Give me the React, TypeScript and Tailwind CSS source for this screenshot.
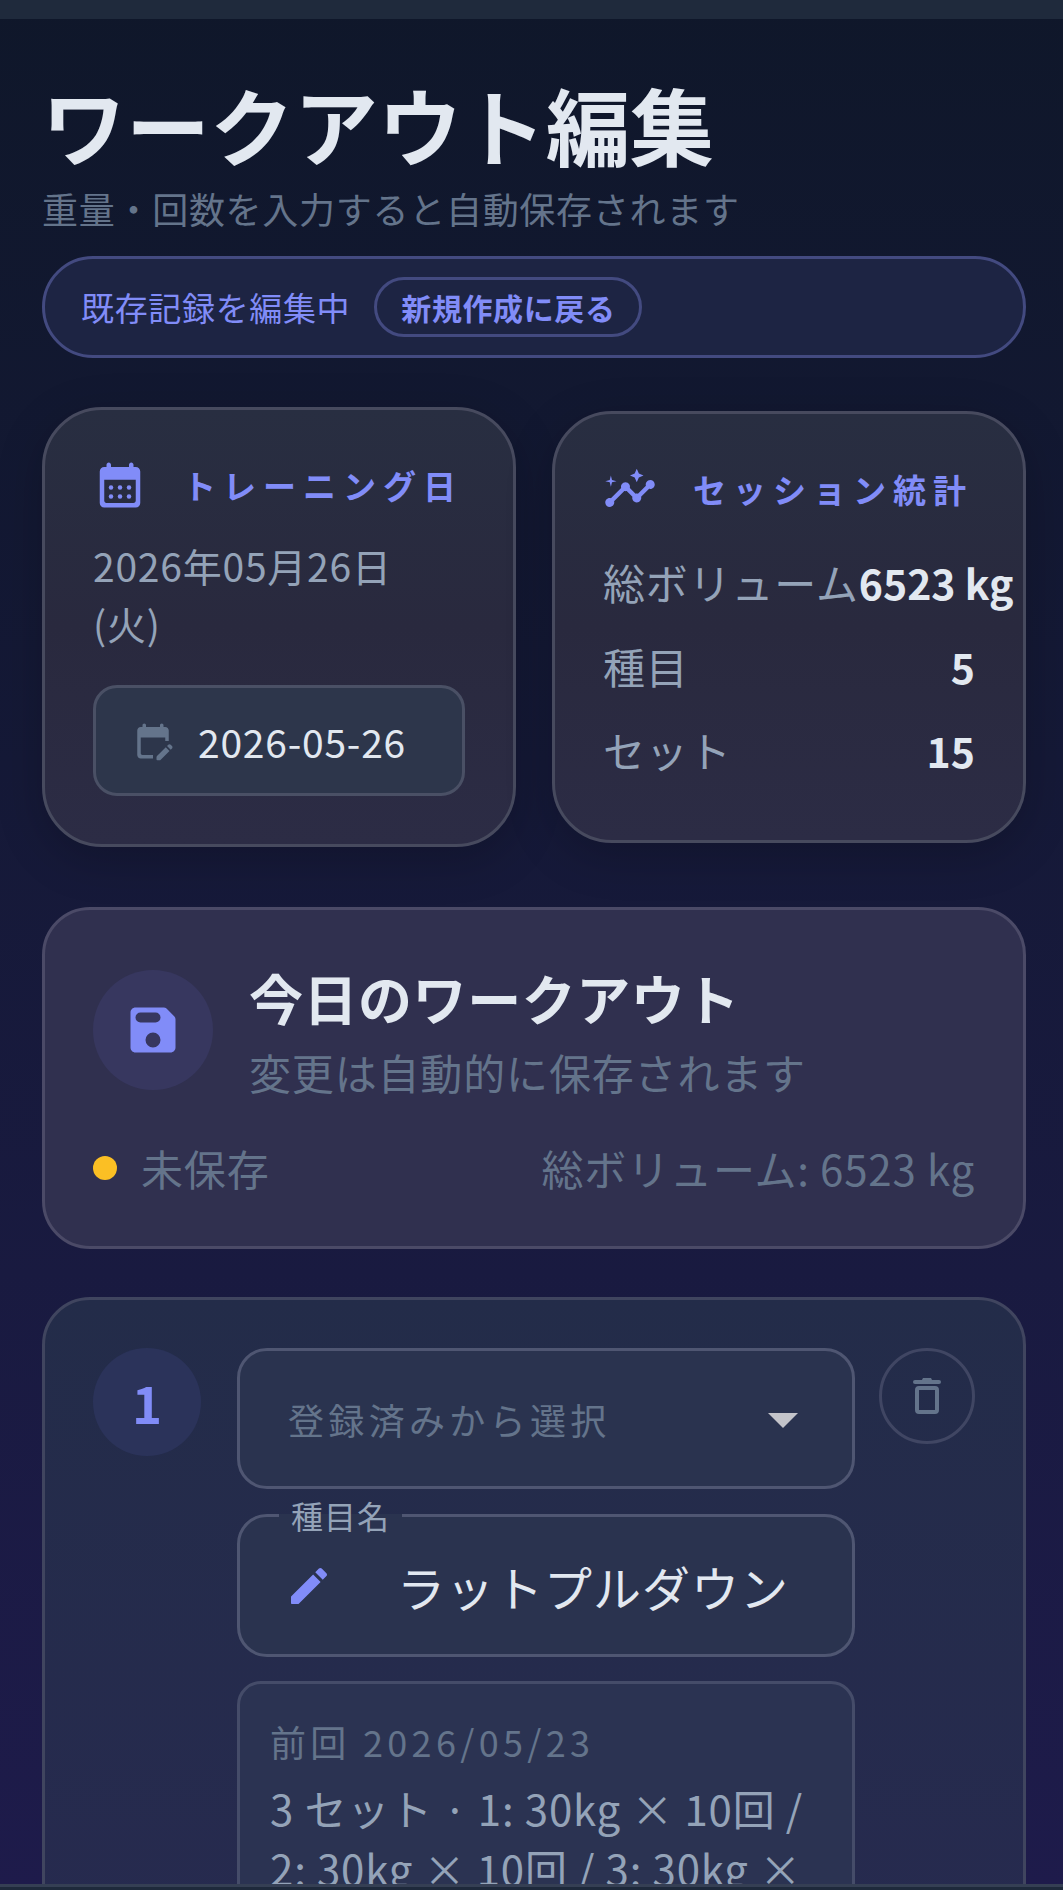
import type { ReactNode } from "react";
import { MdArrowDropDown, MdInsights } from "react-icons/md";

const stats = [
  { label: "総ボリューム", value: "6523 kg" },
  { label: "種目", value: "5" },
  { label: "セット", value: "15" },
];

function CalendarIcon() {
  return (
    <svg viewBox="0 0 24 24" className="size-[54px] shrink-0" fill="currentColor" aria-hidden="true">
      <path
        fillRule="evenodd"
        d="M7 2c.55 0 1 .45 1 1v1h8V3c0-.55.45-1 1-1s1 .45 1 1v1h1c1.1 0 2 .9 2 2v14c0 1.1-.9 2-2 2H5c-1.1 0-2-.9-2-2V6c0-1.1.9-2 2-2h1V3c0-.55.45-1 1-1zM5 9.7V19c0 .55.45 1 1 1h12c.55 0 1-.45 1-1V9.7z"
      />
      {[8, 12, 16].map((x) => (
        <g key={x}>
          <circle cx={x} cy="13.1" r="1" />
          <circle cx={x} cy="17.1" r="1" />
        </g>
      ))}
    </svg>
  );
}

function EditCalendarIcon() {
  return (
    <svg viewBox="0 0 24 24" className="size-[42px] shrink-0 text-[#64748b]" fill="currentColor" aria-hidden="true">
      <path d="M12 22H5c-1.11 0-2-.9-2-2V6c0-1.1.89-2 2-2h1V3c0-.55.45-1 1-1s1 .45 1 1v1h8V3c0-.55.45-1 1-1s1 .45 1 1v1h1c1.1 0 2 .9 2 2v6h-2v-2H5v9c0 .55.45 1 1 1h6z" />
      <path d="M22.13 16.99l.71-.71c.39-.39.39-1.02 0-1.41l-.71-.71c-.39-.39-1.02-.39-1.41 0l-.71.71zM21.42 17.7l-5 5c-.2.2-.45.3-.71.3H14.5c-.28 0-.5-.22-.5-.5v-1.21c0-.27.11-.52.29-.71l5.01-5z" />
    </svg>
  );
}

function SaveIcon() {
  return (
    <svg viewBox="0 0 24 24" className="size-[60px]" fill="currentColor" aria-hidden="true">
      <path
        fillRule="evenodd"
        d="M16.3 3c.4 0 .8.16 1.1.44l3.16 3.16c.28.3.44.7.44 1.1V19c0 1.1-.9 2-2 2H5c-1.1 0-2-.9-2-2V5c0-1.1.9-2 2-2zM7 5a2 2 0 0 0 0 4h6a2 2 0 0 0 0-4zM12 13a3 3 0 1 0 0 6 3 3 0 0 0 0-6z"
      />
    </svg>
  );
}

function PencilIcon() {
  return (
    <svg viewBox="0 0 24 24" className="size-12 shrink-0 text-[#818cf8]" fill="currentColor" aria-hidden="true">
      <path d="M3 17.46v3.04c0 .28.22.5.5.5h3.04c.13 0 .26-.05.35-.15L17.81 9.94l-3.75-3.75L3.15 17.1c-.1.1-.15.22-.15.36zM20.71 7.04c.39-.39.39-1.02 0-1.41l-2.34-2.34c-.39-.39-1.02-.39-1.41 0l-1.83 1.83 3.75 3.75z" />
    </svg>
  );
}

function TrashIcon() {
  return (
    <svg viewBox="0 0 24 24" className="size-12" fill="none" stroke="currentColor" strokeWidth="2" aria-hidden="true">
      <rect x="7" y="8" width="10" height="12" rx="1" />
      <path d="M6 5h12" strokeLinecap="round" />
      <path d="M9.2 4.5L10 3h4l.8 1.5z" fill="currentColor" stroke="none" />
    </svg>
  );
}

function StatCard({ icon, title, children }: { icon: ReactNode; title: string; children: ReactNode }) {
  return (
    <section className="min-w-0 flex-1 rounded-[60px] border-3 border-[#474a5e] bg-linear-to-b from-[#282e41] via-[#29293e] to-[#2c2c45] p-12 shadow-[0_12px_48px_rgba(0,0,0,0.2)]">
      <div className="flex h-[54px] items-center gap-9 text-[#818cf8]">
        {icon}
        <h2 className="text-[33px] leading-[48px] font-bold tracking-[7px] whitespace-nowrap">{title}</h2>
      </div>
      {children}
    </section>
  );
}

function Header() {
  return (
    <header>
      <h1 className="text-[84px] leading-[120px] font-bold text-[#e2e8f0]">ワークアウト編集</h1>
      <p className="text-[36px] leading-[48px] tracking-[0.02em] text-[#64748b]">
        重量・回数を入力すると自動保存されます
      </p>
      <div className="mt-6 flex h-[102px] items-center gap-6 rounded-full border-3 border-[#434a80] bg-[#1d2443] px-9 text-[#818cf8]">
        <span className="text-[33px] leading-[48px] tracking-[0.02em]">既存記録を編集中</span>
        <button className="h-[60px] rounded-full border-3 border-[#434a80] px-6 text-[30px] leading-[48px] font-bold tracking-[0.02em]">
          新規作成に戻る
        </button>
      </div>
    </header>
  );
}

function SaveCard() {
  return (
    <section className="mt-[60px] rounded-[48px] border-3 border-[#4b4a67] bg-[#30304f] p-12">
      <div className="flex items-center gap-9">
        <div className="flex size-[120px] shrink-0 items-center justify-center rounded-full bg-[#37375f] text-[#818cf8]">
          <SaveIcon />
        </div>
        <div>
          <h2 className="text-[54px] leading-[80px] font-bold tracking-[0.01em] text-[#e2e8f0]">今日のワークアウト</h2>
          <p className="mt-1 text-[42px] leading-[60px] tracking-[0.02em] text-[#64748b]">変更は自動的に保存されます</p>
        </div>
      </div>
      <div className="mt-9 flex items-center justify-between text-[42px] leading-[60px] tracking-[0.02em] text-[#64748b]">
        <div className="flex items-center gap-6">
          <span className="size-6 rounded-full bg-[#fbbf24]" />
          <span>未保存</span>
        </div>
        <span>総ボリューム: 6523 kg</span>
      </div>
    </section>
  );
}

function ExerciseCard() {
  return (
    <section className="mt-12 flex items-start rounded-[48px] border-3 border-[#40455f] bg-linear-to-b from-[#232c49] to-[#272a50] p-12">
      <div className="flex size-[108px] shrink-0 items-center justify-center rounded-full bg-[#2b335a] text-[51px] leading-[72px] font-bold text-[#818cf8]">
        1
      </div>

      <div className="mr-6 ml-9 flex min-w-0 flex-1 flex-col gap-6">
        <div className="relative">
          <select
            aria-label="登録済みから選択"
            defaultValue=""
            className="h-[141px] w-full appearance-none rounded-[30px] border-3 border-[#4f5672] bg-[#2a334f] pr-24 pl-12 text-[36px] tracking-[0.12em] text-[#64748b]"
          >
            <option value="">登録済みから選択</option>
            <option value="lat">ラットプルダウン</option>
          </select>
          <MdArrowDropDown className="pointer-events-none absolute inset-y-0 right-9 my-auto size-[72px] text-[#c3c4ca]" />
        </div>

        <fieldset className="-mt-[14px] h-[158px] min-w-0 rounded-[30px] border-3 border-[#4f5672] bg-[#2a334f] pr-9 pl-[45px]">
          <legend className="-ml-1.5 px-3 text-[32px] leading-8 tracking-[1px] text-[#94a3b8]">
            <label htmlFor="exercise">種目名</label>
          </legend>
          <div className="flex h-[110px] items-center gap-16">
            <PencilIcon />
            <input
              id="exercise"
              defaultValue="ラットプルダウン"
              className="h-[72px] w-full min-w-0 bg-transparent text-[48px] tracking-[1px] text-[#e2e8f0] outline-none"
            />
          </div>
        </fieldset>

        <div className="rounded-3xl border-3 border-[#454c69] bg-[#2b3352] p-[30px]">
          <p className="text-[36px] leading-[54px] tracking-[0.12em] text-[#64748b]">前回 2026/05/23</p>
          <p className="mt-2.5 text-[42px] leading-[60px] tracking-[0.02em] text-[#94a3b8]">
            3 セット · 1: 30kg × 10回 / 2: 30kg × 10回 / 3: 30kg × 10回
          </p>
        </div>
      </div>

      <button
        aria-label="種目を削除"
        className="flex size-24 shrink-0 items-center justify-center rounded-full border-3 border-[#404663] text-[#64748b]"
      >
        <TrashIcon />
      </button>
    </section>
  );
}

export default function App() {
  return (
    <div className="flex h-screen flex-col bg-linear-to-b from-[#0f172a] to-[#1e1b4b] font-['Noto_Sans_CJK_JP',sans-serif]">
      <div className="h-[19px] shrink-0 bg-[#1f2a3c]" />

      <main className="mx-auto min-h-0 w-full max-w-[1280px] flex-1 overflow-y-auto pt-[45px] pr-[37px] pb-12 pl-[42px] [scrollbar-width:none]">
        <Header />

        <div className="mt-[49px] flex items-center gap-9">
          <StatCard icon={<CalendarIcon />} title="トレーニング日">
            <p className="mt-6 text-[39px] leading-[58px] tracking-[0.02em] text-[#94a3b8]">
              2026年05月26日
              <br />
              (火)
            </p>
            <label className="mt-[33px] flex h-[111px] items-center gap-6 rounded-3xl border-3 border-[#4a5065] bg-[#2d364b] px-9">
              <EditCalendarIcon />
              <input
                aria-label="トレーニング日"
                defaultValue="2026-05-26"
                className="w-full min-w-0 bg-transparent text-[39px] leading-[60px] tracking-[0.02em] text-[#e2e8f0] outline-none"
              />
            </label>
          </StatCard>

          <StatCard icon={<MdInsights className="size-[54px] shrink-0" />} title="セッション統計">
            <dl className="mt-6 text-[42px] leading-[60px] whitespace-nowrap">
              {stats.map((stat) => (
                <div key={stat.label} className="flex justify-between py-3">
                  <dt className="tracking-[0.02em] text-[#94a3b8]">{stat.label}</dt>
                  <dd className="text-[41px] font-bold text-[#e2e8f0]">{stat.value}</dd>
                </div>
              ))}
            </dl>
          </StatCard>
        </div>

        <SaveCard />
        <ExerciseCard />
      </main>

      {/* Bottom navigation edge */}
      <nav className="h-1.5 shrink-0 border-t-3 border-[#353f54] bg-[#1e293b]" />
    </div>
  );
}
